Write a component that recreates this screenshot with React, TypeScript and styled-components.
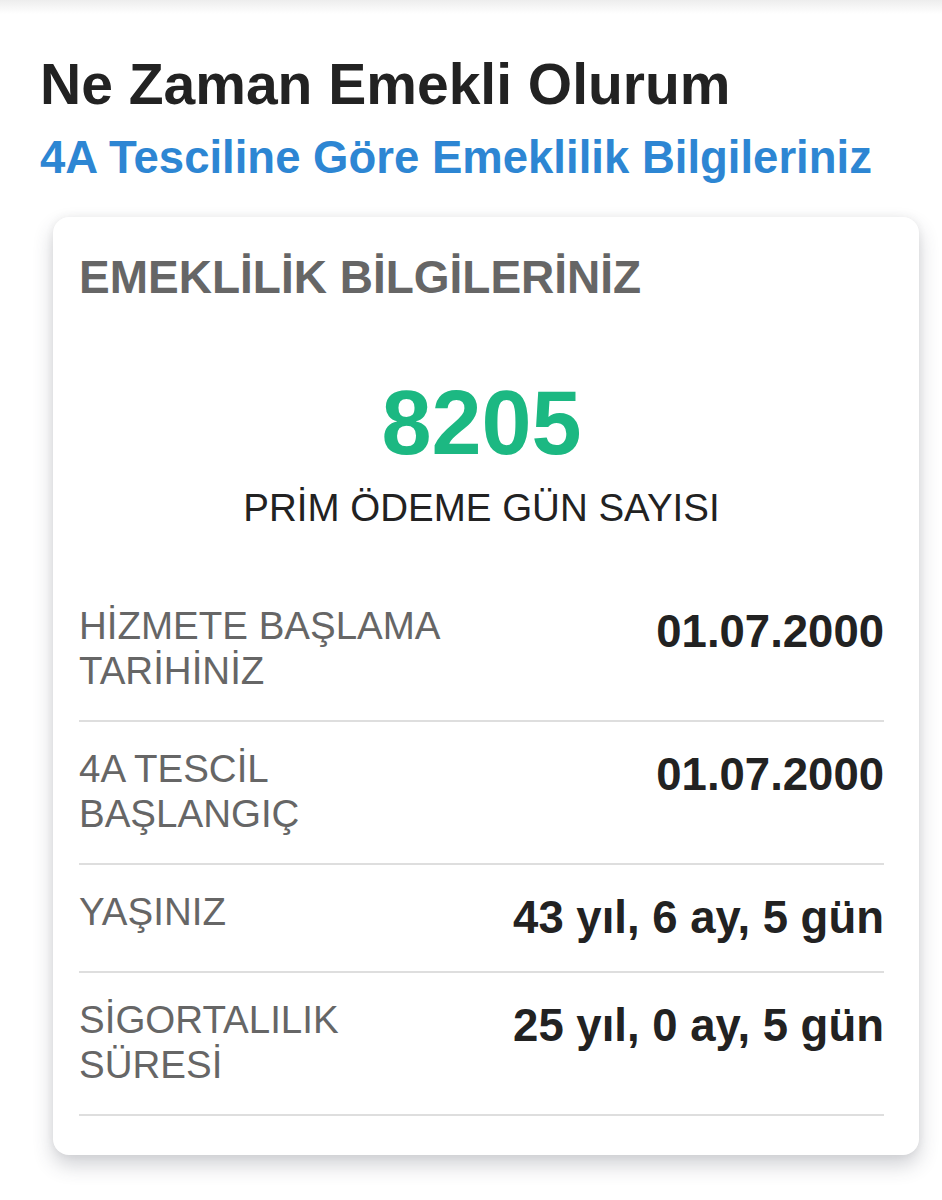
import styled, { createGlobalStyle } from 'styled-components';

const GlobalStyle = createGlobalStyle`
  html, body {
    margin: 0;
    padding: 0;
    background: #ffffff;
  }
  body {
    font-family: "Liberation Sans", Arial, sans-serif;
  }
`;

const Page = styled.div`
  position: relative;
  min-height: 1200px;
  background: #ffffff;
`;

const TopShade = styled.div`
  height: 14px;
  background: linear-gradient(#ededed, #ffffff);
`;

const Header = styled.header`
  padding: 37px 40px 0;
`;

const Title = styled.h1`
  margin: 0;
  font-size: 57px;
  line-height: 66px;
  font-weight: 700;
  color: #222222;
`;

const Subtitle = styled.h2`
  margin: 15px 0 0;
  font-size: 45.5px;
  line-height: 52px;
  font-weight: 700;
  color: #2d86d3;
`;

const Card = styled.section`
  margin: 33px 23px 0 53px;
  padding: 34px 35px 39px 26px;
  background: #ffffff;
  border-radius: 16px;
  box-shadow: 0 10px 20px rgba(60, 64, 80, 0.24), 0 0 8px rgba(0, 0, 0, 0.06);
`;

const CardTitle = styled.h3`
  margin: 0;
  font-size: 46px;
  line-height: 53px;
  font-weight: 700;
  color: #666666;
`;

const Summary = styled.div`
  display: flex;
  flex-direction: column;
  align-items: center;
  margin-top: 67px;
`;

const BigNumber = styled.div`
  font-size: 90px;
  line-height: 104px;
  font-weight: 700;
  color: #1cb882;
`;

const BigLabel = styled.div`
  margin-top: 11px;
  font-size: 38.5px;
  line-height: 44px;
  color: #222222;
`;

const List = styled.div`
  margin-top: 49px;
  display: flex;
  flex-direction: column;
`;

const Row = styled.div`
  display: flex;
  justify-content: space-between;
  align-items: flex-start;
  gap: 20px;
  padding: 24px 0 27px;
  border-bottom: 2px solid #dedede;
`;

const Label = styled.div<{ $width: number }>`
  width: ${({ $width }) => $width}px;
  font-size: 38.5px;
  line-height: 45px;
  color: #666666;
`;

const Value = styled.div`
  margin-top: 3px;
  font-size: 45.5px;
  line-height: 52px;
  font-weight: 700;
  color: #222222;
  white-space: nowrap;
`;

const rows = [
  { label: 'HİZMETE BAŞLAMA TARİHİNİZ', value: '01.07.2000', width: 380 },
  { label: '4A TESCİL BAŞLANGIÇ', value: '01.07.2000', width: 300 },
  { label: 'YAŞINIZ', value: '43 yıl, 6 ay, 5 gün', width: 300 },
  { label: 'SİGORTALILIK SÜRESİ', value: '25 yıl, 0 ay, 5 gün', width: 300 },
];

export default function App() {
  return (
    <>
      <GlobalStyle />
      <Page>
        <TopShade />
        <Header>
          <Title>Ne Zaman Emekli Olurum</Title>
          <Subtitle>4A Tesciline Göre Emeklilik Bilgileriniz</Subtitle>
        </Header>
        <Card>
          <CardTitle>EMEKLİLİK BİLGİLERİNİZ</CardTitle>
          <Summary>
            <BigNumber>8205</BigNumber>
            <BigLabel>PRİM ÖDEME GÜN SAYISI</BigLabel>
          </Summary>
          <List>
            {rows.map((r) => (
              <Row key={r.label}>
                <Label $width={r.width}>{r.label}</Label>
                <Value>{r.value}</Value>
              </Row>
            ))}
          </List>
        </Card>
      </Page>
    </>
  );
}
